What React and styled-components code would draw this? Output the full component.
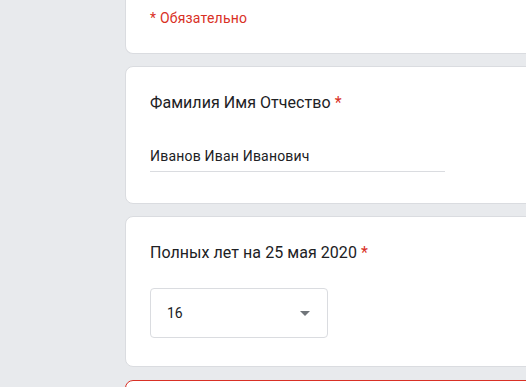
import React from 'react'
import styled, { createGlobalStyle } from 'styled-components'

const GlobalStyle = createGlobalStyle`
	html, body {
		margin: 0;
		padding: 0;
		overflow: hidden;
		background: #e8eaed;
	}
	body {
		font-family: Roboto, "Noto Sans", Arial, sans-serif;
		color: #202124;
	}
`

const Page = styled.div`
	width: 526px;
	height: 387px;
	overflow: hidden;
	padding-left: 125px;
	box-sizing: border-box;
`

const Column = styled.div`
	width: 640px;
	display: flex;
	flex-direction: column;
	gap: 12px;
`

const Card = styled.div`
	background: #fff;
	border: 1px solid ${props => (props.$error ? '#d93025' : '#dadce0')};
	border-radius: 8px;
	padding: ${props => props.$padding || '24px'};
	box-sizing: border-box;
	${props => props.$cutTop && `
		border-top: none;
		border-top-left-radius: 0;
		border-top-right-radius: 0;
	`}
	${props => props.$error && `margin-top: 1px;`}
	${props => props.$minHeight && `min-height: ${props.$minHeight};`}
`

const Required = styled.div`
	color: #d93025;
	font-size: 14px;
	line-height: 20px;
	letter-spacing: 0.2px;
`

const Question = styled.div`
	font-size: 16px;
	line-height: 24px;
	letter-spacing: 0.05px;
	color: #202124;
`

const Star = styled.span`
	color: #d93025;
	margin-left: 4px;
`

const TextAnswer = styled.div`
	margin-top: 31px;
	width: 295px;
	font-size: 14px;
	line-height: 20px;
	padding-bottom: 5px;
	border-bottom: 1px solid #dadce0;
	letter-spacing: 0.2px;
`

const Select = styled.div`
	margin-top: 23px;
	width: 178px;
	height: 50px;
	box-sizing: border-box;
	border: 1px solid #dadce0;
	border-radius: 4px;
	display: flex;
	align-items: center;
	justify-content: space-between;
	padding: 0 17px 0 16px;
	font-size: 14px;
	color: #202124;
`

const Caret = styled.span`
	width: 0;
	height: 0;
	border-left: 5px solid transparent;
	border-right: 5px solid transparent;
	border-top: 5px solid #70757a;
`

export default function App() {
	return (
		<>
			<GlobalStyle />
			<Page>
				<Column>
					<Card $cutTop $padding="8px 24px 25px">
						<Required>* Обязательно</Required>
					</Card>
					<Card $padding="24px 24px 31px">
						<Question>
							Фамилия Имя Отчество<Star>*</Star>
						</Question>
						<TextAnswer>Иванов Иван Иванович</TextAnswer>
					</Card>
					<Card $padding="24px 24px 28px">
						<Question>
							Полных лет на 25 мая 2020<Star>*</Star>
						</Question>
						<Select>
							<span>16</span>
							<Caret />
						</Select>
					</Card>
					<Card $error $minHeight="120px" />
				</Column>
			</Page>
		</>
	)
}
